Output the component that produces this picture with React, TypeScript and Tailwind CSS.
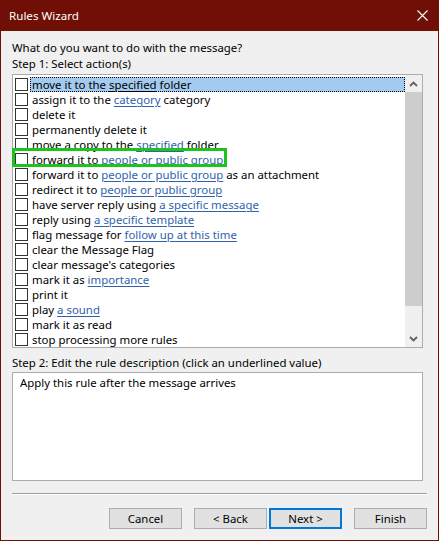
import React from "react";

const FONT = { fontFamily: '"Segoe UI", "Noto Sans", "Open Sans", sans-serif' };

type Part = string | { link: string };

const rows: Part[][] = [
  ["move it to the ", { link: "specified" }, " folder"],
  ["assign it to the ", { link: "category" }, " category"],
  ["delete it"],
  ["permanently delete it"],
  ["move a copy to the ", { link: "specified" }, " folder"],
  ["forward it to ", { link: "people or public group" }],
  ["forward it to ", { link: "people or public group" }, " as an attachment"],
  ["redirect it to ", { link: "people or public group" }],
  ["have server reply using ", { link: "a specific message" }],
  ["reply using ", { link: "a specific template" }],
  ["flag message for ", { link: "follow up at this time" }],
  ["clear the Message Flag"],
  ["clear message's categories"],
  ["mark it as ", { link: "importance" }],
  ["print it"],
  ["play ", { link: "a sound" }],
  ["mark it as read"],
  ["stop processing more rules"],
];

function Row({ parts, selected }: { parts: Part[]; selected?: boolean }) {
  return (
    <div className="flex items-center h-[15px]">
      <div className="w-[13px] h-[13px] border border-[#333333] bg-white ml-[2px] shrink-0" />
      <div
        className={
          selected
            ? "ml-[2px] flex-1 h-[15px] pl-[1px] bg-[#a3cbef] border border-dotted border-black flex items-center whitespace-nowrap"
            : "ml-[2px] flex-1 h-[15px] pl-[2px] flex items-center whitespace-nowrap"
        }
      >
        {parts.map((p, i) =>
          typeof p === "string" ? (
            <span key={i} className="whitespace-pre">{p}</span>
          ) : (
            <span
              key={i}
              className={
                selected
                  ? "underline underline-offset-[1.5px] text-black whitespace-pre"
                  : "underline underline-offset-[1.5px] text-[#2f62ab] whitespace-pre"
              }
            >
              {p.link}
            </span>
          )
        )}
      </div>
    </div>
  );
}

function Btn({ label, primary }: { label: string; primary?: boolean }) {
  return (
    <div
      className={
        primary
          ? "w-[73px] h-[21px] bg-[#e1e1e1] border-2 border-[#0078d7] flex items-center justify-center text-black"
          : "w-[73px] h-[21px] bg-[#e1e1e1] border border-[#adadad] flex items-center justify-center text-black"
      }
    >
      {label}
    </div>
  );
}

export default function App() {
  return (
    <div
      className="w-[439px] h-[541px] bg-[#700f05] flex flex-col text-[11.4px] leading-[16px] text-black overflow-hidden"
      style={FONT}
    >
      {/* Title bar */}
      <div className="h-[31px] shrink-0 flex items-center justify-between pl-[9px] pr-[10px] text-white">
        <span className="leading-[16px] text-[11.6px]">Rules Wizard</span>
        <svg width="11" height="11" viewBox="0 0 11 11" className="mr-[1px]">
          <path d="M0.5 0.5 L10.5 10.5 M10.5 0.5 L0.5 10.5" stroke="white" strokeWidth="1.1" fill="none" />
        </svg>
      </div>

      {/* Body */}
      <div className="flex-1 mx-[1px] mb-[1px] bg-[#f0f0f0] pl-[11px] pr-[11px] pt-[9px] flex flex-col">
        <div className="h-[16px]">What do you want to do with the message?</div>
        <div className="h-[16px]">Step 1: Select action(s)</div>

        {/* Action list */}
        <div className="relative mt-[2px] w-[411px] h-[274px] border border-[#acacac] bg-white flex">
          <div className="flex-1 pt-[2px] leading-[15px]">
            {rows.map((r, i) => (
              <Row key={i} parts={r} selected={i === 0} />
            ))}
          </div>
          <div className="w-[17px] bg-[#f0f0f0] flex flex-col">
            <div className="h-[17px] flex items-center justify-center">
              <svg width="9" height="6" viewBox="0 0 9 6">
                <path d="M1 5 L4.5 1.5 L8 5" stroke="#606060" strokeWidth="1.8" fill="none" />
              </svg>
            </div>
            <div className="h-[214px] bg-[#cdcdcd]" />
            <div className="flex-1" />
            <div className="h-[17px] flex items-center justify-center">
              <svg width="9" height="6" viewBox="0 0 9 6">
                <path d="M1 1 L4.5 4.5 L8 1" stroke="#606060" strokeWidth="1.8" fill="none" />
              </svg>
            </div>
          </div>
          {/* Green highlight box */}
          <div className="absolute left-[-1px] top-[73px] w-[215px] h-[19px] border-[3px] border-[#1ec31e] pointer-events-none" />
        </div>

        <div className="mt-[7px] h-[16px]">Step 2: Edit the rule description (click an underlined value)</div>
        <div className="mt-[1px] w-[411px] h-[109px] border border-[#acacac] bg-white pl-[7px] pt-[2px]">
          Apply this rule after the message arrives
        </div>

        <div className="mt-[12px] h-[1px] bg-[#a0a0a0]" />
        <div className="h-[1px] bg-white" />

        <div className="mt-[13px] flex justify-end">
          <Btn label="Cancel" />
          <div className="w-[12px]" />
          <Btn label="< Back" />
          <div className="w-[2px]" />
          <Btn label="Next >" primary />
          <div className="w-[12px]" />
          <Btn label="Finish" />
        </div>
      </div>
    </div>
  );
}
